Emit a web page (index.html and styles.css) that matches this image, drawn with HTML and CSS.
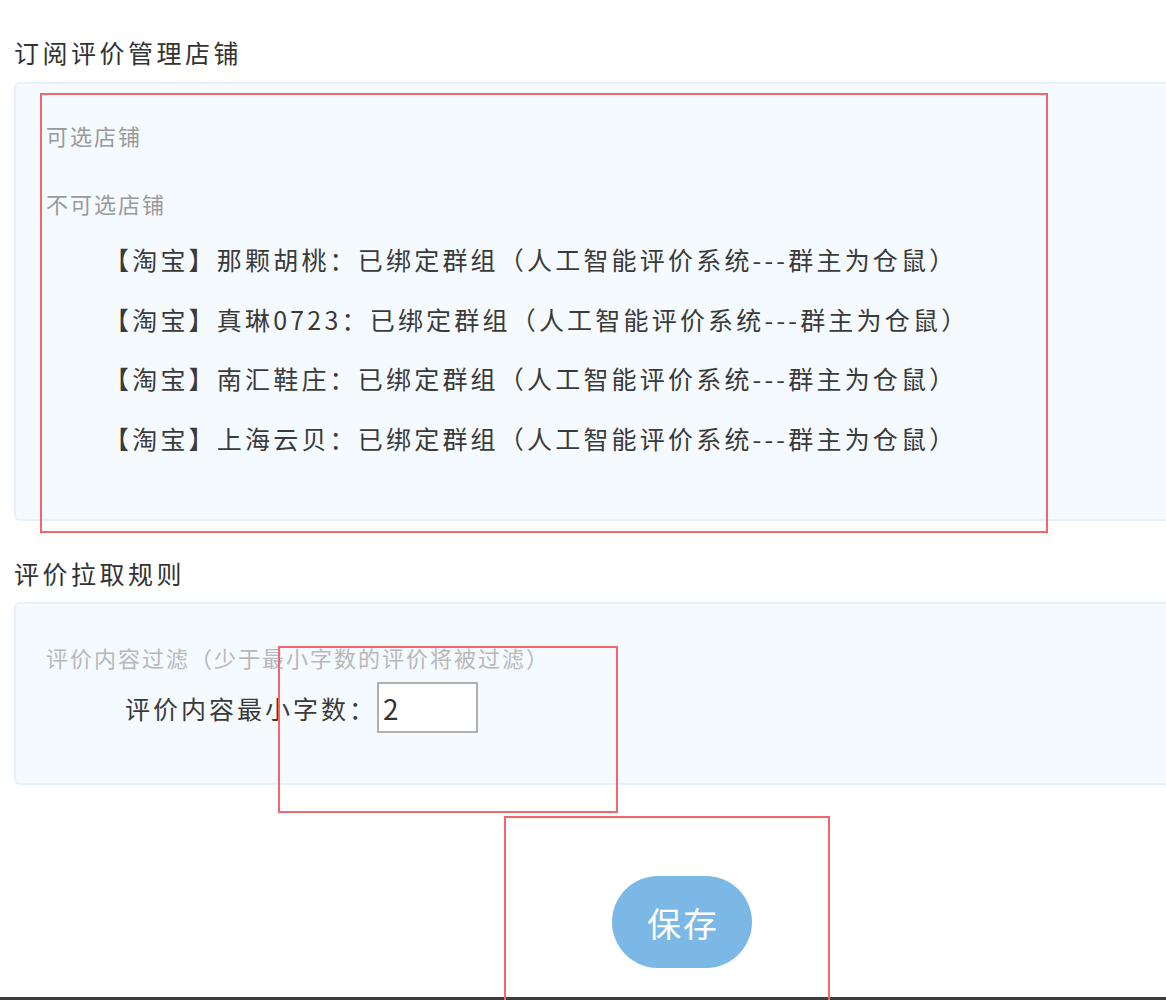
FILE: index.html
```html
<!DOCTYPE html>
<html lang="zh-CN">
<head>
<meta charset="utf-8">
<title>订阅评价管理店铺</title>
<link rel="stylesheet" href="styles.css">
</head>
<body>
<div class="page">
  <h2 class="section-title">订阅评价管理店铺</h2>
  <div class="panel panel-shops">
    <div class="sub-label">可选店铺</div>
    <div class="sub-label sub-label-2">不可选店铺</div>
    <ul class="shop-list">
      <li>【淘宝】那颗胡桃：已绑定群组（人工智能评价系统---群主为仓鼠）</li>
      <li>【淘宝】真琳0723：已绑定群组（人工智能评价系统---群主为仓鼠）</li>
      <li>【淘宝】南汇鞋庄：已绑定群组（人工智能评价系统---群主为仓鼠）</li>
      <li>【淘宝】上海云贝：已绑定群组（人工智能评价系统---群主为仓鼠）</li>
    </ul>
  </div>

  <h2 class="section-title section-title-2">评价拉取规则</h2>
  <div class="panel panel-rules">
    <div class="filter-label">评价内容过滤（少于最小字数的评价将被过滤）</div>
    <div class="field-row">
      <label class="field-label" for="minlen">评价内容最小字数：</label>
      <input class="field-input" id="minlen" type="text" value="2">
    </div>
  </div>

  <div class="actions">
    <button class="save-btn" type="button">保存</button>
  </div>

  <div class="mark mark-1"></div>
  <div class="mark mark-2"></div>
  <div class="mark mark-3"></div>
</div>
</body>
</html>
```

FILE: styles.css
```css
html, body {
  margin: 0;
  padding: 0;
  background: #ffffff;
  overflow: hidden;
}

body {
  font-family: "Noto Sans CJK SC", "Microsoft YaHei", sans-serif;
  color: #333333;
}

.page {
  position: relative;
  box-sizing: border-box;
  height: 1000px;
  padding: 35px 0 0 14px;
  border-bottom: 3px solid #3d3d3d;
}

.section-title {
  margin: 0 0 13px 0;
  font-size: 25px;
  font-weight: normal;
  letter-spacing: 3.5px;
  line-height: 34px;
  height: 34px;
  color: #333333;
  white-space: nowrap;
}

.section-title-2 {
  margin-top: 35px;
  margin-bottom: 12px;
}

.panel {
  background: #f5faff;
  border: 2px solid #e7f1fa;
  border-right: none;
  border-radius: 6px 0 0 6px;
  margin-right: -20px;
  padding-left: 30px;
}

.panel-shops {
  padding-top: 36px;
  padding-bottom: 51px;
}

.sub-label {
  font-size: 22px;
  letter-spacing: 2px;
  line-height: 30px;
  height: 30px;
  color: #9a9a9a;
  white-space: nowrap;
}

.sub-label-2 {
  margin-top: 38px;
}

.shop-list {
  list-style: none;
  margin: 12px 0 0 58px;
  padding: 0;
}

.shop-list li {
  font-size: 25px;
  letter-spacing: 3.2px;
  line-height: 59.5px;
  height: 59.5px;
  color: #3a3a3a;
  white-space: nowrap;
}

.panel-rules {
  padding-top: 38px;
  padding-bottom: 50px;
}

.filter-label {
  font-size: 22px;
  letter-spacing: 2px;
  line-height: 30px;
  height: 30px;
  color: #b8b8b8;
  white-space: nowrap;
}

.field-row {
  display: flex;
  align-items: center;
  margin: 10px 0 0 79px;
  height: 51px;
}

.field-label {
  font-size: 25px;
  letter-spacing: 3px;
  color: #3a3a3a;
  white-space: nowrap;
}

.field-input {
  box-sizing: border-box;
  width: 101px;
  height: 51px;
  margin: 0;
  padding: 0 0 0 4px;
  border: 2px solid #b0b0b0;
  background: #ffffff;
  font-family: "Noto Sans CJK SC", sans-serif;
  font-size: 28px;
  color: #333333;
  outline: none;
}

.actions {
  display: flex;
  margin-top: 91px;
  padding-left: 598px;
}

.save-btn {
  width: 140px;
  height: 92px;
  border: none;
  border-radius: 46px;
  background: #7bb8e5;
  color: #ffffff;
  font-family: "Noto Sans CJK SC", sans-serif;
  font-size: 34px;
  letter-spacing: 2px;
  padding: 0 0 0 2px;
  cursor: pointer;
}

.mark {
  position: absolute;
  border: 2px solid #f6656b;
  pointer-events: none;
}

.mark-1 {
  left: 40px;
  top: 93px;
  width: 1004px;
  height: 436px;
}

.mark-2 {
  left: 278px;
  top: 646px;
  width: 336px;
  height: 163px;
}

.mark-3 {
  left: 504px;
  top: 816px;
  width: 322px;
  height: 200px;
}
```
